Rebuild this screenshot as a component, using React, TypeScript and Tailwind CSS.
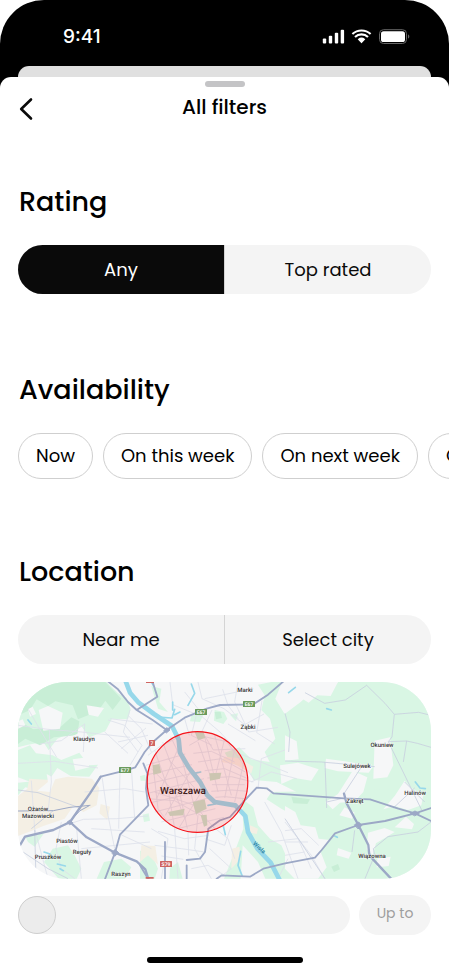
import { useState } from "react";

const availability = ["Now", "On this week", "On next week", "On this month"];

const StatusIcons = () => (
  <svg width="88" height="16" viewBox="0 0 88 16" aria-hidden="true">
    <g fill="#fff">
      <rect x="0.8" y="9.5" width="3.4" height="5" rx="1" />
      <rect x="6.800" y="6.800" width="3.4" height="7.700" rx="1" />
      <rect x="12.8" y="3.800" width="3.4" height="10.700" rx="1" />
      <rect x="18.7" y="0.8" width="3.4" height="13.700" rx="1" />
      <rect x="59" y="2.2" width="24" height="10.8" rx="2.6" />
      <path d="M35.9 10.6l3.3 3.5a.4.4 0 0 0 .6 0l3.3-3.5a.5.5 0 0 0-.1-.7 5.4 5.4 0 0 0-7 0 .5.5 0 0 0-.1.7z" />
    </g>
    <g fill="none" stroke="#fff" strokeWidth="2.1">
      <path d="M33 8a9.4 9.4 0 0 1 13 0" />
      <path d="M30.4 5a13.4 13.4 0 0 1 18.2 0" />
    </g>
    <rect
      x="57.5"
      y="0.7"
      width="27"
      height="13.8"
      rx="4"
      fill="none"
      stroke="#666"
      strokeWidth="1"
    />
    <path d="M86 5.5v4c.8-.3 1.3-1.1 1.3-2s-.5-1.700-1.300-2z" fill="#666" />
  </svg>
);

type Place = { name: string; x: number; y: number };

const places: Place[] = [
  { name: "Marki", x: 227, y: 10 },
  { name: "Ząbki", x: 230, y: 47 },
  { name: "Klaudyn", x: 66, y: 59 },
  { name: "Okuniew", x: 364, y: 65 },
  { name: "Sulejówek", x: 339, y: 86 },
  { name: "Halinów", x: 397, y: 113 },
  { name: "Zakręt", x: 337, y: 121 },
  { name: "Ożarów", x: 20, y: 129 },
  { name: "Mazowiecki", x: 20, y: 136 },
  { name: "Piastów", x: 49, y: 161 },
  { name: "Reguły", x: 64, y: 172 },
  { name: "Pruszków", x: 30, y: 177 },
  { name: "Wiązowna", x: 354, y: 176 },
  { name: "Raszyn", x: 103, y: 194 },
];

const shields = [
  { name: "E67", x: 183, y: 30, green: true },
  { name: "E67", x: 231, y: 22, green: true },
  { name: "E77", x: 107, y: 88, green: true },
  { name: "7", x: 134, y: 61, green: false },
  { name: "S79", x: 148, y: 182, green: false },
];

const CityMap = () => (
  <svg
    viewBox="0 0 413 197"
    className="block w-full rounded-[49px]"
    role="img"
    aria-label="Map of Warszawa"
  >
    <rect width="413" height="197" fill="#f6f7f8" />
    <g transform="scale(0.33333)">
      {/* forests and parks */}
      <g fill="#d9f6e4">
        <path d="M0 0H266L300 34L326 48L338 82L330 112L282 110L262 148L214 166L190 132L150 156L118 170L92 205L76 180L30 188L0 196Z" />
        <path d="M0 204L36 190L54 214L104 220L130 234L184 212L212 250L240 248L214 284L158 282L118 258L92 296L38 300L0 286Z" />
        <path d="M0 302L60 296L84 318L60 326L22 316L0 340Z" />
        <path d="M104 500L150 490L170 520L190 560L176 590H122L78 540Z" />
        <path d="M22 464L78 454L50 494L30 480ZM258 540L310 530L340 556L320 590H236Z" />
        <path d="M400 12L430 20L424 60L450 90L420 80ZM520 100L556 98L546 120L516 118ZM590 84L618 90L628 110L616 126L588 116ZM636 98L660 94L654 118Z" />
        <path d="M720 8L740 40L730 84L756 110L772 170L740 210L760 250L776 300L836 330H1239V0H960L926 38L880 30L848 60L800 96L772 50L792 0H760Z" />
        <path d="M620 212L664 196L700 232L756 240L790 262L776 300L706 294L690 258L640 244Z" />
        <path d="M1239 320V590H894L912 540L878 490L854 446L830 402L790 380L746 352L760 330Z" />
        <path d="M672 350L706 376L720 430L756 470L790 490L816 548L870 556L900 590H742L720 540L674 490L668 590H618L646 520L676 440Z" />
        <path d="M366 506L400 512L420 560L410 590H366ZM456 558L480 540L494 590H454Z" />
        <path d="M374 398L392 394L396 416L378 420ZM366 282L382 278L384 296H368Z" />
      </g>
      <g fill="#c8eed6">
        <path d="M56 0H262L310 50L284 84L262 56L240 88L180 112L164 70L112 58L90 72L56 52L36 84L10 96L30 30Z" />
        <path d="M0 116L46 142L128 134L160 106L184 118L178 160L108 166L66 190L22 170L0 186Z" />
        <path d="M820 344L876 352L868 366L826 364ZM940 554L960 546L966 562L948 570ZM590 90L608 90L612 108L594 112Z" />
      </g>
      <g fill="#f4efe4">
        <path d="M34 290L100 294L150 284L222 290L244 318L236 370L196 390L166 372L140 410L76 432L38 448L0 462V342L28 320Z" />
        <path d="M248 366L276 374L268 414L244 394ZM370 490L412 492L420 548L390 520L366 540Z" />
        <path d="M620 224L662 228L706 254L700 274L650 246L610 240ZM642 500L664 494L668 530L640 560ZM696 430L720 440L716 456L696 452Z" />
      </g>
      {/* built-up clearings */}
      <g fill="#f6f7f8">
        <path d="M62 84L90 72L134 92L126 140L76 146ZM206 70L258 78L240 104L212 98ZM30 82L44 74L54 96L36 104ZM0 118L14 112L22 130L0 140Z" />
        <path d="M164 232L208 226L214 256L172 266ZM58 326L90 300L86 276L112 290L96 330ZM150 168L190 150L208 176L160 190Z" />
        <path d="M848 8L914 0H960L938 42L898 40L872 62L846 46ZM801 160L836 178L842 232L801 236ZM786 250L840 242L902 262L880 296L830 288L790 306Z" />
        <path d="M924 230L980 238L1066 252L1052 272L960 268L920 258ZM1004 266L1048 286L1036 330L1010 358L966 362L944 382L922 360L960 336Z" />
        <path d="M1070 176L1116 166L1126 250L1108 286L1066 290ZM1160 296L1180 318L1216 338L1210 370L1170 384L1130 372L1096 382L1130 342Z" />
        <path d="M980 376L1010 392L1002 410L964 400ZM1164 404L1188 426L1182 442L1130 436ZM1050 452L1100 438L1130 450L1104 466L1074 484L1064 520L1046 502Z" />
        <path d="M801 372L832 390L848 430L892 436L902 470L936 474L908 510L926 556L900 590H830L801 560ZM960 498L1000 512L992 530L956 520ZM1078 530L1118 524L1112 552L1076 556Z" />
      </g>
      {/* local streets */}
      <g fill="none" stroke="#dde1ea" strokeWidth="2.500">
        <path d="M0 130L90 142L190 150L336 166M30 80L70 150L116 226M66 186L130 176L200 126L196 210M0 244L110 238L240 258M94 142L100 300L90 390M40 296L50 440L90 590M130 420L114 500L130 560L170 590" />
        <path d="M110 440L196 412L296 410L390 402M176 440L190 590M200 330L320 320L380 330M252 284L266 380L290 500M306 270L302 440M340 256L350 410M220 440L380 450M190 500L396 480M304 456L400 500" />
        <path d="M270 114L320 130L372 190L336 250M336 84L316 150L360 210M300 180L390 160M310 200L384 138M330 100L370 140L400 210M260 150L330 214M276 110L404 126" />
        <path d="M456 0L464 68L552 104L606 150L666 216L810 272M500 30L540 80L520 160L582 190M540 0L552 50L618 80L680 128L738 96M560 50L706 20M614 22L630 70L660 110M660 0L650 60L692 150L780 136M582 84L552 148L586 204L682 200M732 56L716 152L770 186M630 126L712 176M500 110L514 160" />
        <path d="M390 220L430 190L482 166M384 250L502 216M388 278L522 248M388 306L540 270M390 334L558 290M398 362L566 324M410 390L578 346M430 420L592 380M470 442L618 406M410 204L450 320L470 440M434 180L476 290L508 440M458 164L494 240L536 400M404 240L420 380L456 430M386 350L470 356L566 410M400 260L470 330L500 410M410 330L530 370L590 440M450 230L530 318M480 200L416 350M522 260L442 400M556 320L484 436" />
        <path d="M514 190L560 164L630 180M526 214L580 208L650 240M540 240L610 230L682 270M560 266L620 260L690 290M568 288L640 284L706 300M582 308L680 308M580 328L642 324L690 328M592 346L620 344L680 350M560 164L600 330M590 160L640 340M540 180L580 290M620 170L590 290M650 200L620 348M680 230L650 360M630 184L710 294" />
        <path d="M420 448L500 470L572 460M410 490L490 500L560 510M430 522L496 532M470 440L480 590M510 450L512 520M540 400L530 500L580 590M560 470L620 490L640 430M575 500L640 560L600 590M520 560L570 550L620 580M580 430L630 470L650 530M400 440L450 470L430 590M720 320L730 230L801 204M700 300L760 270L836 290M740 360L790 450L840 590M801 420L880 520L920 590M801 446L850 440L902 490M801 480L870 480M801 520L860 510M750 480L840 470L880 560M780 590L810 530" />
      </g>
      <g fill="none" stroke="#c8cfde" strokeWidth="2.500">
        <path d="M861 32L920 64L982 54L1046 10L1101 64L1129 97L1202 91L1239 100M1129 97L1122 165L1111 179L1211 384M1111 179L1166 177L1198 184L1239 196M1166 177L1156 240M801 237L910 240L1070 254M921 240L926 378M1031 254L978 335M1041 590L1070 520L1066 500L1110 464L1200 450L1239 420M1126 378L1190 318M1160 300L1220 360M801 94L816 150L812 210M926 360L970 350M921 590L801 410M1010 445L1002 510" />
        <path d="M0 324L60 332L186 378M50 444L54 590M0 500L90 560L150 590M106 386L40 440" />
      </g>
      {/* water */}
      <g fill="none" stroke="#97d8ea" strokeLinejoin="round" strokeLinecap="round">
        <path
          strokeWidth="14"
          d="M322 -5L336 32L362 62L408 96L462 132L482 172L486 212L512 256L546 300L568 340L590 360L652 370L682 402L690 450L718 500L758 542L784 592"
        />
        <path
          strokeWidth="5"
          d="M430 106L462 108L470 82M520 6L530 34L510 70M464 60V84M470 98L486 90M530 274L548 270M570 370L592 366M616 432L622 458M668 508L660 550L672 580M30 114L40 126M78 510L96 516L90 530M118 546L142 552M126 560L136 566M812 32L832 16M926 80L940 84M1192 300L1206 318L1222 320M950 462L958 466M400 0L406 10"
        />
      </g>
      {/* trunk roads */}
      <g fill="none" stroke="#9ca8c6" strokeLinejoin="round" strokeLinecap="round">
        <path strokeWidth="3" d="M0 387L106 386L156 376L216 370M150 424L186 386L212 372" />
        <path
          strokeWidth="5.500"
          d="M266 -5L300 22L330 60L356 84L405 115L446 144M356 84L418 44L404 0M248 284L320 266L352 256L380 210L405 180L446 144L500 107L566 80L606 69L706 67L750 38L800 -5M376 244L388 274L384 320L391 370L306 458L291 512L260 594M506 534L546 530L561 510L571 440L606 415L636 405L676 360L716 317L746 319L766 334L978 349L1056 352L1141 380L1191 394L1239 417M441 480V590M506 550V590M366 550L390 590M596 590L611 580L696 584L736 560L801 544L891 527L911 504L951 454L1021 429L1101 417L1191 394L1239 378"
        />
        <path
          strokeWidth="7"
          d="M248 284L216 334L156 420L106 444L21 464L0 500M156 420L206 466L291 512L356 538L382 562L392 594M978 335L986 364L1021 429L1051 489L1054 520L1119 590"
        />
        <path
          fill="#9ca8c6"
          strokeWidth="3"
          d="M282 512L291 502L302 512L291 522ZM1010 428L1022 420L1032 430L1021 440ZM1178 394L1191 387L1204 394L1191 401ZM438 146L446 137L456 144L446 152ZM148 420L156 414L164 422L156 428Z"
        />
      </g>
      {/* city parks under the radius */}
      <g fill="#c5e3cc">
        <path d="M530 150L556 148L562 168L540 174ZM404 250L424 246L430 272L406 278ZM524 360L560 352L566 380L534 396ZM450 390L500 380L496 400L456 402ZM574 274L610 272L606 290L576 296ZM548 400L566 398L568 430L558 434Z" />
      </g>
      <path d="M384 0H408V3H384ZM383 585H407V590H383Z" fill="#cf6562" />
    </g>

    <g
      fontFamily="Roboto, sans-serif"
      textAnchor="middle"
      textRendering="geometricPrecision"
    >
      {shields.map((s, i) => (
        <g key={i}>
          <rect
            x={s.x - (s.name.length > 1 ? 6 : 3)}
            y={s.y - 3}
            width={s.name.length > 1 ? 12 : 6}
            height="6"
            rx="0.5"
            fill={s.green ? "#6a9a5c" : "#cf6562"}
          />
          <text x={s.x} y={s.y + 2} fontSize="5" fontWeight="700" fill="#fff">
            {s.name}
          </text>
        </g>
      ))}
      <g
        fontSize="6"
        fontWeight="500"
        fill="#333"
        stroke="#fff"
        strokeWidth="1"
        strokeOpacity="0.7"
        paintOrder="stroke"
      >
        {places.map((p) => (
          <text key={p.name} x={p.x} y={p.y}>
            {p.name}
          </text>
        ))}
      </g>
      <text x="165" y="112" fontSize="10" fontWeight="500" fill="#222">
        Warszawa
      </text>
      <text
        transform="translate(240 167) rotate(42)"
        fontSize="6"
        fontWeight="500"
        fill="#2783a5"
      >
        Wisła
      </text>
    </g>

    <circle
      cx="179.500"
      cy="100"
      r="50.300"
      fill="#ff0000"
      fillOpacity="0.13"
      stroke="#f5141b"
      strokeWidth="1.200"
    />
  </svg>
);

type SegmentedProps = {
  label: string;
  options: string[];
  selected: string | null;
  onSelect: (option: string) => void;
};

const Segmented = ({ label, options, selected, onSelect }: SegmentedProps) => (
  <div
    role="group"
    aria-label={label}
    className="flex h-[49px] overflow-hidden rounded-full bg-[#f4f4f4] divide-x divide-[#d4d4d4]"
  >
    {options.map((option) => (
      <button
        key={option}
        type="button"
        aria-pressed={selected === option}
        onClick={() => onSelect(option)}
        className={`flex-1 cursor-pointer text-lg ${
          selected === option ? "bg-[#0a0a0a] text-white" : "text-[#0a0a0a]"
        }`}
      >
        {option}
      </button>
    ))}
  </div>
);

const SectionTitle = ({ title }: { title: string }) => (
  <h2 className="pl-px text-[27px] leading-[42px] font-medium">{title}</h2>
);

export default function App() {
  const [rating, setRating] = useState("Any");
  const [slot, setSlot] = useState<string | null>(null);
  const [place, setPlace] = useState<string | null>(null);
  const [radius, setRadius] = useState(0);

  return (
    <div className="min-h-screen overflow-hidden bg-white font-[Poppins,Inter,sans-serif] text-black">
      <div className="rounded-t-[44px] bg-black">
        <div className="flex h-[66px] items-center justify-between pt-2 pr-[39px] pl-[63px]">
          <span className="font-[Inter,sans-serif] text-[19px] font-medium text-white">
            9:41
          </span>
          <StatusIcons />
        </div>
        <div className="mx-[18px] h-[11px] rounded-t-[11px] bg-[#e0e0e0]" />
        <div className="h-3 rounded-t-[11px] bg-white" />
      </div>

      <div className="flex flex-col px-[18px]">
        <div className="-mt-2 h-[6px] w-10 self-center rounded-full bg-[#c4c4c6]" />
        <header className="grid h-10 grid-cols-[1fr_auto_1fr] items-center">
          <button
            type="button"
            aria-label="Back"
            className="w-6 cursor-pointer pt-1"
          >
            <svg width="16" height="24" viewBox="0 0 16 24" fill="none">
              <path
                d="M13 2.500L3.200 12L13 21.500"
                stroke="#0a0a0a"
                strokeWidth="2.600"
                strokeLinecap="round"
                strokeLinejoin="round"
              />
            </svg>
          </button>
          <h1 className="text-xl font-medium">All filters</h1>
        </header>

        <section className="mt-[54px]">
          <SectionTitle title="Rating" />
          <div className="mt-[22px]">
            <Segmented
              label="Rating"
              options={["Any", "Top rated"]}
              selected={rating}
              onSelect={setRating}
            />
          </div>
        </section>

        <section className="mt-[75px]">
          <SectionTitle title="Availability" />
          <div className="-mr-[18px] mt-[22px] flex gap-[10px] overflow-hidden">
            {availability.map((option) => (
              <button
                key={option}
                type="button"
                aria-pressed={slot === option}
                onClick={() => setSlot(option)}
                className="h-[46px] shrink-0 cursor-pointer rounded-full border border-[#cfcfcf] px-[17px] text-lg whitespace-nowrap"
              >
                {option}
              </button>
            ))}
          </div>
        </section>

        <section className="mt-[72px]">
          <SectionTitle title="Location" />
          <div className="mt-[22px]">
            <Segmented
              label="Location"
              options={["Near me", "Select city"]}
              selected={place}
              onSelect={setPlace}
            />
          </div>
          <div className="mt-[18px]">
            <CityMap />
          </div>
          <div className="mt-4 flex items-center gap-[9px]">
            <input
              type="range"
              min={0}
              max={100}
              value={radius}
              onChange={(e) => setRadius(Number(e.target.value))}
              aria-label="Radius"
              className="h-[38px] min-w-0 flex-1 cursor-pointer appearance-none rounded-full bg-[#f4f4f4] [&::-webkit-slider-thumb]:size-[38px] [&::-webkit-slider-thumb]:appearance-none [&::-webkit-slider-thumb]:rounded-full [&::-webkit-slider-thumb]:border [&::-webkit-slider-thumb]:border-[#cfcfcf] [&::-webkit-slider-thumb]:bg-[#ececec]"
            />
            <input
              type="text"
              placeholder="Up to"
              aria-label="Up to"
              className="h-10 w-[72px] rounded-full bg-[#f4f4f4] pb-1 text-center text-sm placeholder:text-[#9e9e9e]"
            />
          </div>
        </section>

        <div className="mt-[22px] mb-2 h-[6px] w-[156px] self-center rounded-full bg-black" />
      </div>
    </div>
  );
}
